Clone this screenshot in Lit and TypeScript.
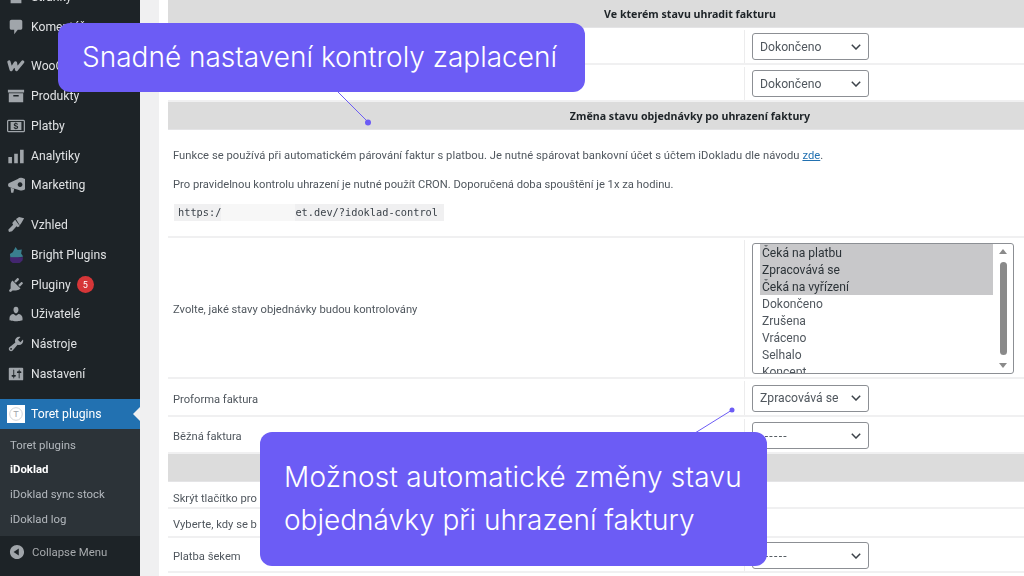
import { LitElement, html, css, svg } from 'lit';
import { customElement } from 'lit/decorators.js';

const icons = {
  pages: svg`<path d="M4 3h9l3 3v11H4z"/>`,
  comments: svg`<path d="M5 2h10c1.1 0 2 .9 2 2v7c0 1.1-.9 2-2 2h-3l-4 5v-5H5c-1.1 0-2-.9-2-2V4c0-1.1.9-2 2-2z"/>`,
  woo: svg`<path d="M2.2 5.5 L4.6 14 L9.4 6.5 L10.6 14 L17.4 5.5" fill="none" stroke="currentColor" stroke-width="3.6" stroke-linejoin="round" stroke-linecap="round"/>`,
  products: svg`<path fill-rule="evenodd" d="M1 3h18v3H1zM2 7h16v10H2zM7 9v1.5h6V9z"/>`,
  payments: svg`<rect x="0.7" y="3.7" width="18.6" height="12.6" rx="1" fill="none" stroke="currentColor" stroke-width="1.4"/><rect x="4" y="5.5" width="12" height="9"/><text x="10" y="13.8" font-size="9.5" font-weight="700" text-anchor="middle" fill="#1d2327" font-family="Liberation Sans, sans-serif">$</text>`,
  analytics: svg`<path d="M1.5 11h4v7h-4zM8 7.5h4V18H8zM14.5 3h4v15h-4z"/>`,
  marketing: svg`<path fill-rule="evenodd" d="M12 3.2 A7 7 0 1 1 14 15.8 L3 12.5 A2.6 2.6 0 0 1 3 7.5zM14.5 7a2.6 2.6 0 1 0 .01 0z"/><path d="M4 13l4 1.2-1 4.3H4.6z"/>`,
  appearance: svg`<path d="M10 3.2 13.4 1l5.6 1.6-3 5.2-1.8 2.6zM9 4.2l5.2 7-2.2 1.4-1.4-1.2-5 5.6-3.4.8-.8-2.4 5.4-5.6-1-2z"/>`,
  plugins: svg`<path d="M13.11 4.36L9.87 7.6 8 5.73l3.24-3.24c.35-.34 1.05-.2 1.56.32.52.51.66 1.21.31 1.55zm-8 1.77l.91-1.12 9.01 9.01-1.19.84c-.71.71-2.63 1.16-3.82 1.16H6.14L4.9 17.26c-.59.59-1.54.59-2.12 0-.59-.58-.59-1.53 0-2.12l1.24-1.24v-3.88c0-1.13.4-3.19 1.09-3.89zm7.26 3.97l3.24-3.24c.34-.35 1.04-.21 1.55.31.52.51.66 1.21.31 1.55l-3.24 3.25z"/>`,
  users: svg`<path d="M10 9.25c-2.27 0-2.73-3.44-2.73-3.44C7 4.02 7.82 2 9.97 2c2.16 0 2.98 2.02 2.71 3.81 0 0-.41 3.44-2.68 3.44zm0 2.57L12.72 10c2.39 0 4.52 2.33 4.52 4.53v2.49s-3.65 1.13-7.24 1.13c-3.65 0-7.24-1.13-7.24-1.13v-2.49c0-2.25 1.94-4.48 4.47-4.48z"/>`,
  tools: svg`<path d="M16.68 9.77c-1.34 1.34-3.3 1.67-4.95.99l-5.41 6.52c-.99.99-2.59.99-3.58 0s-.99-2.59 0-3.57l6.52-5.42c-.68-1.65-.35-3.61.99-4.95 1.28-1.28 3.12-1.62 4.72-1.06l-2.89 2.89 2.82 2.82 2.86-2.87c.53 1.58.18 3.39-1.08 4.65zM3.81 16.21c.4.39 1.04.39 1.43 0 .4-.4.4-1.04 0-1.43-.39-.4-1.03-.4-1.43 0-.39.39-.39 1.03 0 1.43z"/>`,
  settings: svg`<path d="M18 16V4c0-.55-.45-1-1-1H3c-.55 0-1 .45-1 1v12c0 .55.45 1 1 1h14c.55 0 1-.45 1-1zM8 11h1c.55 0 1 .45 1 1s-.45 1-1 1H8v1.5c0 .28-.22.5-.5.5s-.5-.22-.5-.5V13H6c-.55 0-1-.45-1-1s.45-1 1-1h1V5.5c0-.28.22-.5.5-.5s.5.22.5.5V11zm5-2h-1c-.55 0-1-.45-1-1s.45-1 1-1h1V5.5c0-.28.22-.5.5-.5s.5.22.5.5V7h1c.55 0 1 .45 1 1s-.45 1-1 1h-1v5.5c0 .28-.22.5-.5.5s-.5-.22-.5-.5V9z"/>`,
  bright: svg`<path fill="#3a7f8e" d="M9.5 1l2.4 3.4 4.6-.4-.8 4.4 2.3 3.2-6 1.4H3.8l-.6-4.2L6.4 7z"/><path fill="#43266f" d="M3.2 12.4h14.6l-.6 3.8-3 2.8H6.2l-2.6-2.4z"/>`,
  collapse: svg`<path d="M10 2.16c4.33 0 7.84 3.51 7.84 7.84s-3.51 7.84-7.84 7.84S2.16 14.33 2.16 10 5.71 2.16 10 2.16zm2 11.72V6.12L6.18 9.97z"/>`,
};

type MenuItem = { label: string; icon: keyof typeof icons; badge?: string };

const groups: MenuItem[][] = [
  [
    { label: 'Stránky', icon: 'pages' },
    { label: 'Komentáře', icon: 'comments' },
  ],
  [
    { label: 'WooCommerce', icon: 'woo' },
    { label: 'Produkty', icon: 'products' },
    { label: 'Platby', icon: 'payments' },
    { label: 'Analytiky', icon: 'analytics' },
    { label: 'Marketing', icon: 'marketing' },
  ],
  [
    { label: 'Vzhled', icon: 'appearance' },
    { label: 'Bright Plugins', icon: 'bright' },
    { label: 'Pluginy', icon: 'plugins', badge: '5' },
    { label: 'Uživatelé', icon: 'users' },
    { label: 'Nástroje', icon: 'tools' },
    { label: 'Nastavení', icon: 'settings' },
  ],
];

const statuses = ['Čeká na platbu', 'Zpracovává se', 'Čeká na vyřízení', 'Dokončeno', 'Zrušena', 'Vráceno', 'Selhalo', 'Koncept'];

@customElement('app-root')
export class AppRoot extends LitElement {
  static styles = css`
    :host {
      display: flex;
      width: 1024px;
      height: 576px;
      overflow: hidden;
      position: relative;
      background: #f0f0f1;
      font-family: Roboto, 'Noto Sans', sans-serif;
    }

    .sidebar {
      width: 140px;
      flex: none;
      background: #1d2327;
      color: #f0f0f1;
      font-size: 12.2px;
      filter: blur(0.3px);
    }
    .menu {
      margin-top: -18px;
    }
    .group {
      margin-bottom: 9.8px;
    }
    .group:last-of-type {
      margin-bottom: 11px;
    }
    .item {
      display: flex;
      align-items: center;
      height: 29.8px;
      padding-left: 7px;
      gap: 6px;
      color: #dfe1e3;
      white-space: nowrap;
    }
    .item svg {
      width: 18px;
      height: 18px;
      flex: none;
      fill: currentColor;
      color: #a0a5aa;
    }
    .badge {
      width: 17px;
      height: 17px;
      border-radius: 50%;
      background: #d63638;
      color: #fff;
      font-size: 9px;
      display: flex;
      align-items: center;
      justify-content: center;
    }
    .current {
      background: #2271b1;
      color: #fff;
      position: relative;
    }
    .current::after {
      content: '';
      position: absolute;
      right: 0;
      top: 8px;
      border: 7px solid transparent;
      border-left: 0;
      border-right-color: #f0f0f1;
    }
    .sub {
      background: #2c3338;
      padding: 4px 0 5px;
      font-size: 11.4px;
      color: #b4b9be;
    }
    .sub div {
      height: 24.7px;
      line-height: 24.7px;
      padding-left: 10px;
    }
    .sub .on {
      color: #fff;
      font-weight: 700;
    }
    .collapse {
      height: 31px;
      color: #a7aaad;
      font-size: 11.4px;
      padding-left: 8px;
    }

    .main {
      flex: 1;
      min-width: 0;
      display: flex;
      padding-left: 19px;
    }
    .page {
      flex: 1;
      min-width: 0;
      background: #fff;
      padding-left: 9px;
      overflow: hidden;
      filter: blur(0.3px);
    }
    .table {
      width: 1044px;
      font-size: 11.2px;
      color: #50575e;
    }
    .head {
      background: #dcdcdc;
      color: #1d2327;
      font-family: 'Noto Sans', sans-serif;
      font-weight: 700;
      text-align: center;
      font-size: 10.65px;
      height: 28px;
      line-height: 28px;
      border-bottom: 1px solid #e4e4e6;
      box-sizing: border-box;
    }
    .row {
      display: grid;
      grid-template-columns: 577px 1fr;
      border-bottom: 2px solid #f0f0f1;
      box-sizing: border-box;
      padding-top: 2px;
    }
    .row > div {
      display: flex;
      align-items: center;
    }
    .label {
      padding: 2px 0 0 5px;
      border-right: 1px solid #ececed;
    }
    .control {
      padding-left: 7px;
    }
    .h27 { height: 27px; }
    .h27 .label { padding-top: 5px; }
    .h29 { height: 29px; }
    .h35 { height: 35px; }
    .h37 { height: 37px; }
    .h38 { height: 38px; }
    .h141 { height: 141px; }

    .info {
      height: 108px;
      box-sizing: border-box;
      padding: 19px 5px 0;
      border-bottom: 2px solid #f0f0f1;
    }
    .info p {
      margin: 0 0 14.8px;
      line-height: 14.5px;
    }
    .info p.long {
      letter-spacing: 0.05px;
    }
    .info p:last-of-type {
      margin-bottom: 10.8px;
    }
    .info a {
      color: #2271b1;
      text-decoration: underline;
    }
    code {
      display: inline-flex;
      width: 270px;
      height: 17px;
      align-items: center;
      box-sizing: border-box;
      padding-left: 4px;
      margin-left: 1px;
      background: #f0f0f1;
      color: #3c434a;
      font-family: 'DejaVu Sans Mono', monospace;
      font-size: 10.3px;
      white-space: pre;
    }
    code .gap {
      width: 74px;
      align-self: stretch;
      background: #f7f7f7;
    }

    .select {
      width: 117px;
      height: 27px;
      box-sizing: border-box;
      border: 1px solid #8c8f94;
      border-radius: 3px;
      background: #fff;
      display: flex;
      align-items: center;
      justify-content: space-between;
      padding: 0 7px;
      font-size: 12.2px;
      color: #50575e;
    }
    .select svg {
      width: 10px;
      height: 6px;
      fill: none;
      stroke: #3c434a;
      stroke-width: 1.5;
    }
    .select .dash {
      letter-spacing: 1.3px;
    }

    .list {
      width: 262px;
      height: 131px;
      box-sizing: border-box;
      border: 1px solid #8c8f94;
      border-radius: 3px;
      display: flex;
      overflow: hidden;
      font-size: 12.1px;
      color: #50575e;
    }
    .options {
      flex: 1;
      padding-left: 7px;
    }
    .options div {
      height: 17px;
      line-height: 19px;
      padding-left: 2px;
      white-space: nowrap;
    }
    .options .picked {
      background: #c8c8ca;
      color: #2c3338;
    }
    .scroll {
      width: 20px;
      flex: none;
      display: flex;
      flex-direction: column;
      align-items: center;
      justify-content: space-between;
      padding: 5px 0;
      box-sizing: border-box;
    }
    .scroll i {
      width: 0;
      height: 0;
      border: 4px solid transparent;
    }
    .scroll .up {
      border-top: 0;
      border-bottom: 5px solid #8a8a8a;
    }
    .scroll .down {
      border-bottom: 0;
      border-top: 5px solid #8a8a8a;
    }
    .scroll .thumb {
      width: 7px;
      height: 93px;
      background: #8a8a8a;
      border-radius: 4px;
    }

    .callout {
      position: absolute;
      background: #6c5cf5;
      color: #fff;
      border-radius: 12px;
      font-family: Inter, sans-serif;
      font-weight: 300;
      box-sizing: border-box;
      white-space: nowrap;
    }
    .c1 {
      left: 58px;
      top: 23px;
      width: 527px;
      height: 69px;
      padding-left: 24px;
      font-size: 28px;
      line-height: 69px;
    }
    .c2 {
      left: 260px;
      top: 432px;
      width: 507px;
      height: 134px;
      padding: 24px 0 0 24px;
      font-size: 28px;
      line-height: 43px;
    }
    .c2 .wide {
      letter-spacing: 0.23px;
    }
    .lines {
      position: absolute;
      left: 0;
      top: 0;
      width: 1024px;
      height: 576px;
      pointer-events: none;
    }
  `;

  private select(value: string, cls = '') {
    return html`<div class="select">
      <span class=${cls}>${value}</span>
      <svg viewBox="0 0 10 6"><path d="M.8.8 5 5 9.2.8" /></svg>
    </div>`;
  }

  private renderSidebar() {
    return html`
      <nav class="sidebar">
        <div class="menu">
          ${groups.map(
            (group) => html`
              <div class="group">
                ${group.map(
                  (item) => html`
                    <div class="item">
                      <svg viewBox="0 0 20 20">${icons[item.icon]}</svg>
                      <span>${item.label}</span>
                      ${item.badge ? html`<span class="badge">${item.badge}</span>` : ''}
                    </div>
                  `,
                )}
              </div>
            `,
          )}
          <div class="item current">
            <svg viewBox="0 0 20 20">
              <rect width="20" height="20" fill="#fff" />
              <circle cx="10" cy="10" r="7" fill="none" stroke="#c9ced3" stroke-width="1" />
              <text x="10" y="13.5" font-size="10" text-anchor="middle" fill="#a0a5aa" font-family="Liberation Sans, sans-serif">T</text>
            </svg>
            <span>Toret plugins</span>
          </div>
          <div class="sub">
            <div>Toret plugins</div>
            <div class="on">iDoklad</div>
            <div>iDoklad sync stock</div>
            <div>iDoklad log</div>
          </div>
          <div class="item collapse">
            <svg viewBox="0 0 20 20">${icons.collapse}</svg>
            <span>Collapse Menu</span>
          </div>
        </div>
      </nav>
    `;
  }

  private renderTable() {
    return html`
      <div class="table">
        <div class="head">Ve kterém stavu uhradit fakturu</div>
        <div class="row h37"><div class="label"></div><div class="control">${this.select('Dokončeno')}</div></div>
        <div class="row h37"><div class="label"></div><div class="control">${this.select('Dokončeno')}</div></div>
        <div class="head">Změna stavu objednávky po uhrazení faktury</div>
        <div class="info">
          <p class="long">Funkce se používá při automatickém párování faktur s platbou. Je nutné spárovat bankovní účet s účtem iDokladu dle návodu <a>zde</a>.</p>
          <p>Pro pravidelnou kontrolu uhrazení je nutné použít CRON. Doporučená doba spouštění je 1x za hodinu.</p>
          <code>https:/<span class="gap"></span>et.dev/?idoklad-control</code>
        </div>
        <div class="row h141">
          <div class="label">Zvolte, jaké stavy objednávky budou kontrolovány</div>
          <div class="control">
            <div class="list">
              <div class="options">
                ${statuses.map((s, i) => html`<div class=${i < 3 ? 'picked' : ''}>${s}</div>`)}
              </div>
              <div class="scroll"><i class="up"></i><span class="thumb"></span><i class="down"></i></div>
            </div>
          </div>
        </div>
        <div class="row h38"><div class="label">Proforma faktura</div><div class="control">${this.select('Zpracovává se')}</div></div>
        <div class="row h37"><div class="label">Běžná faktura</div><div class="control">${this.select('------', 'dash')}</div></div>
        <div class="head"></div>
        <div class="row h27"><div class="label">Skrýt tlačítko pro</div><div class="control"></div></div>
        <div class="row h29"><div class="label">Vyberte, kdy se b</div><div class="control"></div></div>
        <div class="row h35"><div class="label">Platba šekem</div><div class="control">${this.select('------', 'dash')}</div></div>
      </div>
    `;
  }

  render() {
    return html`
      ${this.renderSidebar()}
      <main class="main">
        <div class="page">${this.renderTable()}</div>
      </main>
      <svg class="lines" viewBox="0 0 1024 576">
        <path d="M337 91 368 122M695 433 732 410" stroke="#6c5cf5" stroke-width="1" fill="none" />
        <circle cx="368" cy="122.5" r="3" fill="#6c5cf5" />
        <circle cx="732" cy="410" r="2.5" fill="#6c5cf5" />
      </svg>
      <div class="callout c1">Snadné nastavení kontroly zaplacení</div>
      <div class="callout c2"><span class="wide">Možnost automatické změny stavu</span><br />objednávky při uhrazení faktury</div>
    `;
  }
}
